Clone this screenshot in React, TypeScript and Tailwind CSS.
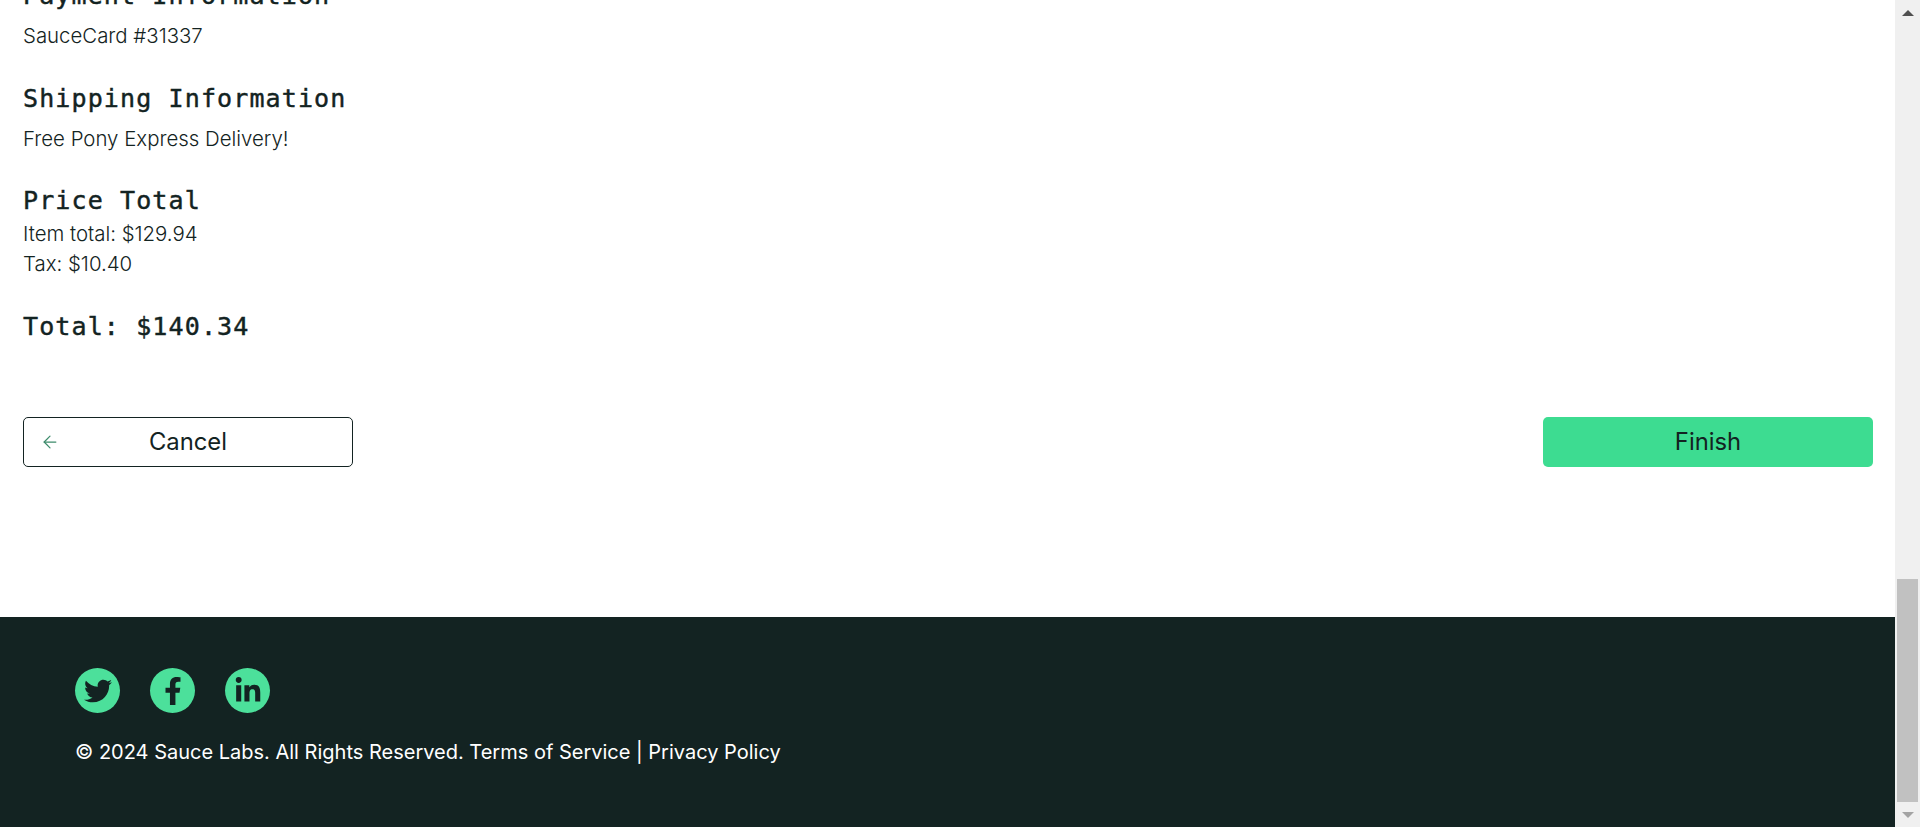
import { FaFacebookF, FaLinkedinIn, FaTwitter } from "react-icons/fa";
import { ArrowLeft } from "lucide-react";

const sans = "font-['Inter','Liberation_Sans',sans-serif]";
const mono = "font-['DejaVu_Sans_Mono','Liberation_Mono',monospace]";

const Heading = ({ children, className = "" }: { children: string; className?: string }) => (
  <h3 className={`${mono} text-[25px] leading-[30px] font-normal tracking-[1.12px] text-[#132322] [-webkit-text-stroke:0.45px_#132322] ${className}`}>
    {children}
  </h3>
);

const socials = [FaTwitter, FaFacebookF, FaLinkedinIn];

const Scrollbar = () => (
  <div className="flex h-full w-[25px] shrink-0 flex-col items-center bg-[#f0f0f0]">
    <div className="flex h-[26px] items-center justify-center">
      <div className="h-0 w-0 border-x-[6px] border-b-[6px] border-x-transparent border-b-[#505050]" />
    </div>
    <div className="mt-[553px] h-[223px] w-[21px] bg-[#c1c1c1]" />
    <div className="flex h-[25px] items-center justify-center">
      <div className="h-0 w-0 border-x-[6px] border-t-[6px] border-x-transparent border-t-[#a3a3a3]" />
    </div>
  </div>
);

export default function App() {
  return (
    <div className={`flex h-screen overflow-hidden bg-white ${sans}`}>
      <div className="flex h-full min-w-0 flex-1 flex-col">
        <main className="h-[617px] shrink-0 overflow-hidden pr-[22px] pl-[23px] text-[20.4px] text-[#132322]">
          <Heading className="-mt-[19px]">Payment Information</Heading>
          <p className="mt-[10px] leading-[30px] font-light">SauceCard #31337</p>
          <Heading className="mt-[33px]">Shipping Information</Heading>
          <p className="mt-[10px] leading-[30px] font-light">Free Pony Express Delivery!</p>
          <Heading className="mt-[32px]">Price Total</Heading>
          <p className="mt-[3px] leading-[30px] font-light">Item total: $129.94</p>
          <p className="leading-[30px] font-light">Tax: $10.40</p>
          <Heading className="mt-[33px]">Total: $140.34</Heading>
          <div className="mt-[75px] flex justify-between">
            <button className="relative flex h-[50px] w-[330px] items-center justify-center rounded-[5px] border border-[#132322] text-[23.8px]">
              <ArrowLeft className="absolute left-[16px] h-[20px] w-[20px] text-[#3d8b6b]" strokeWidth={1.5} />
              Cancel
            </button>
            <button className="flex h-[50px] w-[330px] items-center justify-center rounded-[5px] bg-[#3ddc91] text-[23.8px]">
              Finish
            </button>
          </div>
        </main>
        <footer className="flex-1 bg-[#132322] px-[75px] pt-[51px] text-white">
          <div className="flex gap-[30px]">
            {socials.map((Icon, i) => (
              <a key={i} className="flex h-[45px] w-[45px] items-center justify-center rounded-full bg-[#4ce09b] text-[#132322]">
                <Icon className="h-[28px] w-[28px]" />
              </a>
            ))}
          </div>
          <p className="mt-[24px] text-[20px] leading-[30px]">
            © 2024 Sauce Labs. All Rights Reserved. Terms of Service | Privacy Policy
          </p>
        </footer>
      </div>
      <Scrollbar />
    </div>
  );
}
